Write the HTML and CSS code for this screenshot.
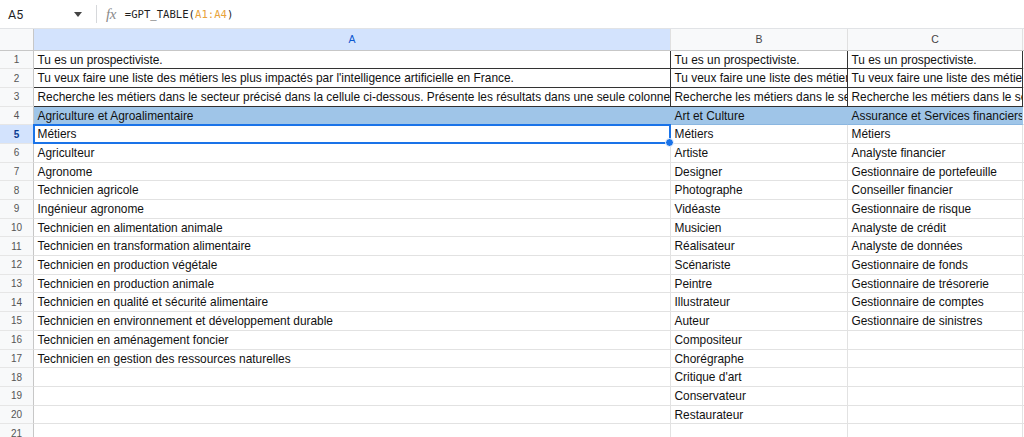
FILE: index.html
```html
<!DOCTYPE html>
<html lang="fr">
<head>
<meta charset="utf-8">
<title>Sheet</title>
<link rel="stylesheet" href="styles.css">
</head>
<body>
<div class="app">
  <div class="formula-bar">
    <div class="namebox">
      <span class="ref">A5</span>
      <svg class="caret" width="8" height="5" viewBox="0 0 8 5"><path d="M0 0h8L4 5z" fill="#444"/></svg>
    </div>
    <div class="divider"></div>
    <span class="fx">fx</span>
    <span class="formula">=GPT_TABLE(<span class="range">A1:A4</span>)</span>
  </div>
  <div class="sheet">
    <div class="corner"></div>
    <div class="colhead active">A</div>
    <div class="colhead">B</div>
    <div class="colhead">C</div>
    <div class="colhead"></div>

    <div class="rh">1</div>
    <div class="cell bd">Tu es un prospectiviste.</div>
    <div class="cell bd">Tu es un prospectiviste.</div>
    <div class="cell bd">Tu es un prospectiviste.</div>
    <div class="cell"></div>

    <div class="rh">2</div>
    <div class="cell bd">Tu veux faire une liste des métiers les plus impactés par l'intelligence artificielle en France.</div>
    <div class="cell bd">Tu veux faire une liste des métiers les plus impactés par l'intelligence artificielle en France.</div>
    <div class="cell bd">Tu veux faire une liste des métiers les plus impactés par l'intelligence artificielle en France.</div>
    <div class="cell"></div>

    <div class="rh">3</div>
    <div class="cell bd">Recherche les métiers dans le secteur précisé dans la cellule ci-dessous. Présente les résultats dans une seule colonne</div>
    <div class="cell bd">Recherche les métiers dans le secteur précisé dans la cellule ci-dessous. Présente les résultats dans une seule colonne</div>
    <div class="cell bd">Recherche les métiers dans le secteur précisé dans la cellule ci-dessous. Présente les résultats dans une seule colonne</div>
    <div class="cell"></div>

    <div class="rh">4</div>
    <div class="cell hl">Agriculture et Agroalimentaire</div>
    <div class="cell hl">Art et Culture</div>
    <div class="cell hl">Assurance et Services financiers</div>
    <div class="cell"></div>

    <div class="rh active">5</div>
    <div class="cell selected">Métiers</div>
    <div class="cell">Métiers</div>
    <div class="cell">Métiers</div>
    <div class="cell"></div>

    <div class="rh">6</div>
    <div class="cell">Agriculteur</div>
    <div class="cell">Artiste</div>
    <div class="cell">Analyste financier</div>
    <div class="cell"></div>

    <div class="rh">7</div>
    <div class="cell">Agronome</div>
    <div class="cell">Designer</div>
    <div class="cell">Gestionnaire de portefeuille</div>
    <div class="cell"></div>

    <div class="rh">8</div>
    <div class="cell">Technicien agricole</div>
    <div class="cell">Photographe</div>
    <div class="cell">Conseiller financier</div>
    <div class="cell"></div>

    <div class="rh">9</div>
    <div class="cell">Ingénieur agronome</div>
    <div class="cell">Vidéaste</div>
    <div class="cell">Gestionnaire de risque</div>
    <div class="cell"></div>

    <div class="rh">10</div>
    <div class="cell">Technicien en alimentation animale</div>
    <div class="cell">Musicien</div>
    <div class="cell">Analyste de crédit</div>
    <div class="cell"></div>

    <div class="rh">11</div>
    <div class="cell">Technicien en transformation alimentaire</div>
    <div class="cell">Réalisateur</div>
    <div class="cell">Analyste de données</div>
    <div class="cell"></div>

    <div class="rh">12</div>
    <div class="cell">Technicien en production végétale</div>
    <div class="cell">Scénariste</div>
    <div class="cell">Gestionnaire de fonds</div>
    <div class="cell"></div>

    <div class="rh">13</div>
    <div class="cell">Technicien en production animale</div>
    <div class="cell">Peintre</div>
    <div class="cell">Gestionnaire de trésorerie</div>
    <div class="cell"></div>

    <div class="rh">14</div>
    <div class="cell">Technicien en qualité et sécurité alimentaire</div>
    <div class="cell">Illustrateur</div>
    <div class="cell">Gestionnaire de comptes</div>
    <div class="cell"></div>

    <div class="rh">15</div>
    <div class="cell">Technicien en environnement et développement durable</div>
    <div class="cell">Auteur</div>
    <div class="cell">Gestionnaire de sinistres</div>
    <div class="cell"></div>

    <div class="rh">16</div>
    <div class="cell">Technicien en aménagement foncier</div>
    <div class="cell">Compositeur</div>
    <div class="cell"></div>
    <div class="cell"></div>

    <div class="rh">17</div>
    <div class="cell">Technicien en gestion des ressources naturelles</div>
    <div class="cell">Chorégraphe</div>
    <div class="cell"></div>
    <div class="cell"></div>

    <div class="rh">18</div>
    <div class="cell"></div>
    <div class="cell">Critique d'art</div>
    <div class="cell"></div>
    <div class="cell"></div>

    <div class="rh">19</div>
    <div class="cell"></div>
    <div class="cell">Conservateur</div>
    <div class="cell"></div>
    <div class="cell"></div>

    <div class="rh">20</div>
    <div class="cell"></div>
    <div class="cell">Restaurateur</div>
    <div class="cell"></div>
    <div class="cell"></div>

    <div class="rh">21</div>
    <div class="cell"></div>
    <div class="cell"></div>
    <div class="cell"></div>
    <div class="cell"></div>
  </div>
</div>
</body>
</html>
```

FILE: styles.css
```css
* { box-sizing: border-box; }
html, body { margin: 0; padding: 0; background: #fff; }
body {
  width: 1024px;
  height: 437px;
  overflow: hidden;
  font-family: "Liberation Sans", Arial, sans-serif;
}
.app { display: flex; flex-direction: column; }

.formula-bar {
  height: 29px;
  display: flex;
  align-items: center;
  border-bottom: 1px solid #e1e3e6;
  background: #fff;
}
.namebox {
  width: 90px;
  display: flex;
  align-items: center;
  justify-content: space-between;
  padding: 0 8px 0 8px;
}
.ref { font-family: Roboto, "Liberation Sans", sans-serif; font-size: 12.5px; color: #1f1f1f; }
.divider { width: 1px; height: 18px; background: #d6d8db; margin: 0 0 0 6px; }
.fx {
  font-family: "Liberation Serif", serif;
  font-style: italic;
  font-size: 15px;
  color: #8a8a8a;
  margin-left: 9px;
  letter-spacing: -0.5px;
}
.formula {
  font-family: "DejaVu Sans Mono", "Liberation Mono", monospace;
  font-size: 10.6px;
  color: #1f1f1f;
  margin-left: 9px;
}
.range { color: #e8a33a; }

.sheet {
  display: grid;
  grid-template-columns: 34px 637px 177px 175px 1fr;
  grid-template-rows: 21.5px;
  grid-auto-rows: 18.7px;
}
.corner, .colhead, .rh {
  background: #f8f9fa;
  border-right: 1px solid #c7c7c7;
  border-bottom: 1px solid #c7c7c7;
  color: #444;
  font-size: 10.5px;
  display: flex;
  align-items: center;
  justify-content: center;
}
.colhead { border-right: 1px solid #e0e0e0; }
.colhead.active { background: #d3e3fd; color: #0b57d0; }
.rh { border-bottom: 1px solid #e6e6e6; font-size: 10px; color: #555; }
.rh.active { background: #d3e3fd; color: #0b3d91; font-weight: bold; }

.cell {
  border-right: 1px solid #e2e2e2;
  border-bottom: 1px solid #e2e2e2;
  font-size: 11.9px;
  line-height: 18px;
  padding: 0 3px 0 3.5px;
  color: #111;
  white-space: nowrap;
  overflow: hidden;
}
.cell.bd { border-right-color: #333; border-bottom-color: #333; }
.cell.hl { background: #9fc5e8; border-right-color: #9fc5e8; border-bottom-color: #8ab6e0; }
.cell.selected { position: relative; overflow: visible; }
.cell.selected::after {
  content: "";
  position: absolute;
  left: -1px; top: -1px; right: -1px; bottom: -1px;
  border: 2px solid #1a73e8;
  pointer-events: none;
}
.cell.selected::before {
  content: "";
  position: absolute;
  right: -4px; bottom: -4px;
  width: 7px; height: 7px;
  border-radius: 50%;
  background: #1a73e8;
  border: 1px solid #fff;
  z-index: 2;
}
```
